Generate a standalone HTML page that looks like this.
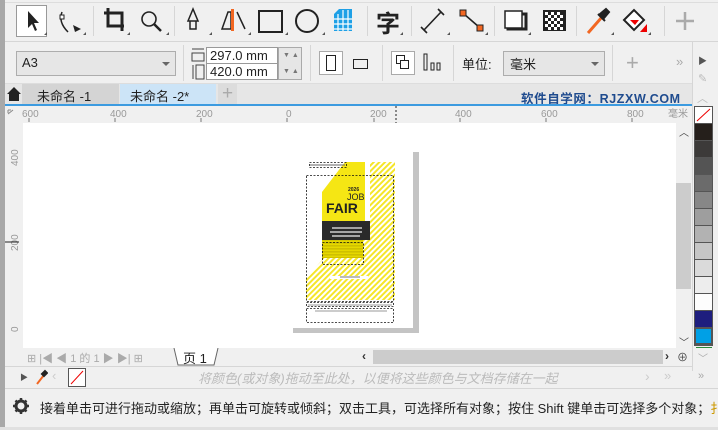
<!DOCTYPE html>
<html><head><meta charset="utf-8"><style>
*{margin:0;padding:0;box-sizing:border-box}
body{width:718px;height:430px;background:#f0f0f0;position:relative;overflow:hidden;font-family:"Liberation Sans","Noto Sans CJK SC",sans-serif;font-size:13px;color:#222}
.a{position:absolute}
.sep{position:absolute;width:1px;background:#d6d6d6}
.hl{position:absolute;height:1px;background:#d6d6d6}
</style></head><body>
<div class="a" style="left:0;top:0;width:5px;height:430px;background:#a8a8a8"></div>
<div class="hl" style="left:5px;top:2px;width:713px;background:#ddd"></div>
<svg class="a" style="left:5px;top:3px" width="713" height="38" viewBox="5 3 713 38">
<rect x="16.5" y="5.5" width="30" height="31" fill="#fff" stroke="#999"/>
<path d="M28 11 L28 28 L32 24 L35 31 L37 30 L34 23 L39 23 Z" fill="#222"/>
<path d="M44 35 l3 0 l0 -3z M83 35 l3 0 l0 -3z M127 35 l3 0 l0 -3z M166 35 l3 0 l0 -3z M209 35 l3 0 l0 -3z M248 35 l3 0 l0 -3z M285 35 l3 0 l0 -3z M322 35 l3 0 l0 -3z M400 35 l3 0 l0 -3z M447 35 l3 0 l0 -3z M485 35 l3 0 l0 -3z M528 35 l3 0 l0 -3z M611 35 l3 0 l0 -3z M648 35 l3 0 l0 -3z" fill="#555"/>
<path d="M62 12 q-4 10 6 20" fill="none" stroke="#222" stroke-width="1.5"/><rect x="60" y="15" width="4" height="4" fill="#fff" stroke="#222"/><path d="M73 25 l8 4 l-6 3z" fill="#222"/>
<path d="M108 8 v18 h16 M104 13 h18 v18" fill="none" stroke="#222" stroke-width="3"/>
<circle cx="149" cy="19" r="7" fill="none" stroke="#222" stroke-width="1.6"/><path d="M154 24 l7 7" stroke="#222" stroke-width="2.5"/>
<path d="M193 9 l-5 12 h10z M190 21 v8 h6 v-8" fill="none" stroke="#222" stroke-width="1.5"/>
<path d="M222 29 l6 -17 h3 v17 z M237 12 l8 17" fill="none" stroke="#222" stroke-width="1.5"/><rect x="231" y="9" width="3" height="22" fill="#f26722"/>
<rect x="259" y="11" width="23" height="21" fill="none" stroke="#222" stroke-width="2"/>
<circle cx="307" cy="21" r="11" fill="none" stroke="#222" stroke-width="2"/>
<path d="M334 14 l5 -5 h13 v22 h-18z" fill="#1ea0e6"/><path d="M338 14v17M343 10v21M348 10v21M334 19h18M334 24h18M334 29h18" stroke="#fff" stroke-width="1.2"/>
<text x="376" y="32" font-size="24" font-weight="bold" fill="#222" font-family="Noto Sans CJK SC">字</text>
<path d="M424 30 l17 -18 M421 27 l6 6 M438 9 l6 6" stroke="#222" stroke-width="1.6"/>
<path d="M464 14 l15 13" stroke="#222" stroke-width="1.6"/><rect x="460" y="10" width="6" height="6" fill="#f26722" stroke="#222"/><rect x="477" y="25" width="6" height="6" fill="#f26722" stroke="#222"/>
<rect x="505" y="11" width="17" height="17" fill="#fff" stroke="#222" stroke-width="1.5"/><path d="M522 14 h4 v15 h-18 v-1" fill="none" stroke="#222" stroke-width="3"/>
<rect x="543" y="10" width="23" height="21" fill="#222"/>
<g fill="#fff"><rect x="545" y="12" width="3" height="3"/><rect x="551" y="12" width="3" height="3"/><rect x="557" y="12" width="3" height="3"/><rect x="548" y="15" width="3" height="3"/><rect x="554" y="15" width="3" height="3"/><rect x="560" y="15" width="3" height="3"/><rect x="545" y="18" width="3" height="3"/><rect x="551" y="18" width="3" height="3"/><rect x="557" y="18" width="3" height="3"/><rect x="548" y="21" width="3" height="3"/><rect x="554" y="21" width="3" height="3"/><rect x="560" y="21" width="3" height="3"/><rect x="545" y="24" width="3" height="3"/><rect x="551" y="24" width="3" height="3"/><rect x="557" y="24" width="3" height="3"/><rect x="548" y="27" width="3" height="3"/><rect x="554" y="27" width="3" height="3"/><rect x="560" y="27" width="3" height="3"/></g>
<path d="M588 33 l14 -16" stroke="#f26722" stroke-width="3"/><path d="M600 14 l6 -5 l3 3 l-5 6z M598 14 l7 7" stroke="#222" stroke-width="2" fill="#222"/>
<path d="M624 20 l10 -10 l10 10 l-10 10z" fill="#fff" stroke="#222" stroke-width="2"/><path d="M630 20 h9 l-4 5z" fill="#e00"/><path d="M647 24 v8 h-7z" fill="#e00"/>
<path d="M685 12 v18 M676 21 h18" stroke="#aaa" stroke-width="2.5"/>
</svg>
<div class="sep" style="left:93px;top:6px;height:30px"></div>
<div class="sep" style="left:174px;top:6px;height:30px"></div>
<div class="sep" style="left:367px;top:6px;height:30px"></div>
<div class="sep" style="left:411px;top:6px;height:30px"></div>
<div class="sep" style="left:494px;top:6px;height:30px"></div>
<div class="sep" style="left:576px;top:6px;height:30px"></div>
<div class="sep" style="left:664px;top:6px;height:30px"></div>
<div class="hl" style="left:5px;top:41px;width:713px"></div>
<div class="a" style="left:16px;top:51px;width:160px;height:25px;background:#e6e6e6;border:1px solid #adadad;padding:3px 5px;font-size:13px">A3</div>
<div class="a" style="left:162px;top:62px;border:4px solid transparent;border-top:4px solid #666"></div>
<div class="sep" style="left:183px;top:45px;height:36px"></div>
<svg class="a" style="left:190px;top:46px" width="16" height="34"><path d="M2 3h12M2 7h12v8h-12z" fill="none" stroke="#444"/><path d="M3 19v14M6 19h8v14h-8z" fill="none" stroke="#444"/></svg>
<div class="a" style="left:206px;top:47px;width:72px;height:33px;background:#fff;border:1px solid #999"></div>
<div class="a" style="left:206px;top:63px;width:72px;height:1px;background:#999"></div>
<div class="a" style="left:210px;top:48px;font-size:13px">297.0 mm</div>
<div class="a" style="left:210px;top:64px;font-size:13px">420.0 mm</div>
<div class="a" style="left:278px;top:47px;width:24px;height:33px;background:#e6e6e6;border:1px solid #aaa;color:#777;font-size:7px;line-height:16px;padding-left:4px">▼ ▲<br>▼ ▲</div>
<div class="sep" style="left:310px;top:45px;height:36px"></div>
<div class="a" style="left:319px;top:51px;width:24px;height:24px;background:#fff;border:1px solid #aaa"></div>
<div class="a" style="left:326px;top:55px;width:10px;height:16px;border:1px solid #222"></div>
<div class="a" style="left:353px;top:59px;width:15px;height:10px;border:1px solid #222"></div>
<div class="sep" style="left:382px;top:45px;height:36px"></div>
<div class="a" style="left:391px;top:51px;width:24px;height:24px;background:#fff;border:1px solid #aaa"></div>
<div class="a" style="left:396px;top:55px;width:9px;height:9px;border:1px solid #222"></div>
<div class="a" style="left:400px;top:60px;width:9px;height:9px;border:1px solid #222;background:#fff"></div>
<svg class="a" style="left:422px;top:53px" width="20" height="20"><rect x="2" y="1" width="3" height="16" fill="none" stroke="#222"/><rect x="9" y="10" width="3" height="7" fill="none" stroke="#222"/><rect x="15" y="10" width="3" height="7" fill="none" stroke="#222"/></svg>
<div class="sep" style="left:453px;top:45px;height:36px"></div>
<div class="a" style="left:462px;top:54px;font-size:13px">单位:</div>
<div class="a" style="left:503px;top:51px;width:102px;height:25px;background:#e6e6e6;border:1px solid #adadad;padding:2px 6px;font-size:13px">毫米</div>
<div class="a" style="left:591px;top:62px;border:4px solid transparent;border-top:4px solid #666"></div>
<div class="sep" style="left:612px;top:45px;height:36px"></div>
<div class="a" style="left:626px;top:50px;font-size:22px;color:#aaa">+</div>
<div class="a" style="left:676px;top:54px;font-size:13px;color:#aaa">»</div>
<div class="sep" style="left:692px;top:41px;height:330px"></div>
<div class="a" style="left:698px;top:54px;font-size:9px;color:#555">▶</div>
<div class="a" style="left:698px;top:72px;font-size:11px;color:#bbb">✎</div>
<div class="a" style="left:697px;top:90px;font-size:11px;color:#bbb">︿</div>
<div class="hl" style="left:5px;top:83px;width:687px;background:#ddd"></div>
<div class="a" style="left:5px;top:84px;width:687px;height:21px;background:#e6e6e6"></div>
<svg class="a" style="left:6px;top:86px" width="16" height="16"><path d="M1 8 L8 1 L15 8 H13 V15 H3 V8Z" fill="#222"/></svg>
<div class="a" style="left:22px;top:84px;width:97px;height:21px;background:#d4d4d4"></div>
<div class="a" style="left:37px;top:86px;font-size:13px">未命名 -1</div>
<div class="a" style="left:120px;top:84px;width:96px;height:21px;background:#cce4f7"></div>
<div class="a" style="left:130px;top:86px;font-size:13px">未命名 -2*</div>
<div class="a" style="left:218px;top:84px;width:19px;height:21px;background:#dcdcdc;color:#aaa;font-size:19px;text-align:center;line-height:20px">+</div>
<div class="a" style="left:521px;top:88px;font-size:12.5px;font-weight:bold;color:#1f4b8e;letter-spacing:0.6px">软件自学网：RJZXW.COM</div>
<div class="a" style="left:5px;top:104px;width:687px;height:2px;background:#3c9be0"></div>
<div class="a" style="left:5px;top:106px;width:687px;height:17px;background:#f0f0f0"></div>
<div class="a" style="left:5px;top:106px;width:18px;height:242px;background:#f0f0f0"></div>
<svg class="a" style="left:5px;top:106px" width="687" height="242" font-family="Liberation Sans" font-size="10" fill="#999">
<text x="17" y="11">600</text><text x="105" y="11">400</text><text x="191" y="11">200</text><text x="281" y="11">0</text><text x="365" y="11">200</text><text x="450" y="11">400</text><text x="536" y="11">600</text><text x="622" y="11">800</text><text x="663" y="11" font-family="Noto Sans CJK SC">毫米</text>
<path d="M24 16v-4M110 16v-4M196 16v-4M282 16v-4M369 16v-4M455 16v-4M541 16v-4M627 16v-4" stroke="#777"/>
<path d="M391 0v17" stroke="#222" stroke-dasharray="2,2"/>
<g transform="translate(13,60) rotate(-90)"><text x="0" y="0">400</text></g>
<g transform="translate(13,145) rotate(-90)"><text x="0" y="0">200</text></g>
<g transform="translate(13,226) rotate(-90)"><text x="0" y="0">0</text></g>
<path d="M0 136h14" stroke="#222"/>
<path d="M3 8l5 -4M3 4h3M3 4v3" stroke="#888"/>
</svg>
<div class="a" style="left:23px;top:123px;width:653px;height:225px;background:#fff"></div>
<div class="a" style="left:676px;top:123px;width:16px;height:225px;background:#f0f0f0"></div>
<div class="a" style="left:676px;top:183px;width:15px;height:106px;background:#ccc"></div>
<div class="a" style="left:679px;top:124px;font-size:10px;color:#444">︿</div>
<div class="a" style="left:679px;top:334px;font-size:10px;color:#444">﹀</div>
<div class="a" style="left:293px;top:152px;width:126px;height:181px;background:#c4c4c4"></div>
<svg class="a" style="left:270px;top:140px" width="160" height="200" viewBox="0 0 160 200">
<defs><pattern id="h" width="4" height="4" patternUnits="userSpaceOnUse" patternTransform="rotate(45)"><rect width="2" height="4" fill="#f5e629"/></pattern>
<pattern id="hs" width="4" height="3" patternUnits="userSpaceOnUse"><rect width="4" height="1.6" fill="#cfc000"/></pattern></defs>
<rect x="17" y="7" width="126" height="181" fill="#fff"/>
<polygon points="100,22 125,22 125,160 36,160 36,138 52,120 52,100 100,100" fill="url(#h)"/>
<polygon points="75,22 95,22 95,81 52,81 52,52" fill="#f5e614"/>
<rect x="52" y="81" width="48" height="19" fill="#2a2a2a"/>
<rect x="52" y="100" width="41" height="18" fill="#e6d800"/>
<rect x="52" y="100" width="41" height="18" fill="url(#hs)"/>
<path d="M62 88h30M60 92h32M62 96h28" stroke="#eee" stroke-width="1.2"/>
<text x="78" y="51" font-size="5" font-weight="bold" fill="#222">2026</text>
<text x="77" y="60" font-size="9" fill="#222">JOB</text>
<text x="56" y="73" font-size="14" font-weight="bold" fill="#222">FAIR</text>
<rect x="60" y="136" width="38" height="3" fill="#fff"/><rect x="70" y="136" width="20" height="2" fill="#bbb"/>
<g fill="none" stroke="#111" stroke-dasharray="2,1.5" stroke-width="0.8">
<rect x="39.5" y="22.5" width="37" height="5"/>
<rect x="36.5" y="35.5" width="87" height="126"/>
<rect x="52.5" y="102.5" width="41" height="22"/>
<rect x="36.5" y="162.5" width="87" height="4"/>
<rect x="36.5" y="168.5" width="87" height="14"/>
</g>
<path d="M40 25h35" stroke="#666"/>
<path d="M38 165h84M45 171h72" stroke="#999" stroke-width="1"/>
</svg>
<div class="a" style="left:694px;top:106px;width:19px;height:240px;background:#555"></div>
<svg class="a" style="left:695px;top:107px" width="17" height="238">
<rect width="17" height="16" fill="#fff"/><path d="M2 14L15 2" stroke="#e00"/>
<rect y="17" width="17" height="16" fill="#251f1b"/>
<rect y="34" width="17" height="16" fill="#3c3a39"/>
<rect y="51" width="17" height="16" fill="#545454"/>
<rect y="68" width="17" height="16" fill="#6b6b6b"/>
<rect y="85" width="17" height="16" fill="#878787"/>
<rect y="102" width="17" height="16" fill="#9e9e9e"/>
<rect y="119" width="17" height="16" fill="#b2b2b2"/>
<rect y="136" width="17" height="16" fill="#c6c6c6"/>
<rect y="153" width="17" height="16" fill="#dadada"/>
<rect y="170" width="17" height="16" fill="#ededed"/>
<rect y="187" width="17" height="16" fill="#fdfdfd"/>
<rect y="204" width="17" height="16" fill="#1e1e7e"/>
<rect x="1" y="222" width="15" height="14" fill="#00a0e6"/>
</svg>
<div class="a" style="left:696px;top:347px;width:16px;height:1px;background:#2a8a3a"></div>
<div class="a" style="left:698px;top:350px;font-size:10px;color:#aaa">﹀</div>
<div class="a" style="left:698px;top:370px;font-size:11px;color:#aaa">»</div>
<div class="a" style="left:23px;top:348px;width:669px;height:18px;background:#f0f0f0"></div>
<div class="a" style="left:27px;top:350px;font-size:11px;color:#aaa;white-space:nowrap">⊞ |◀ ◀ 1 的 1 ▶ ▶| ⊞</div>
<svg class="a" style="left:170px;top:348px" width="52" height="18"><path d="M4 0 L8 17 H44 L48 0" fill="#fff" stroke="#666"/></svg>
<div class="a" style="left:183px;top:348px;font-size:13px">页 1</div>
<div class="a" style="left:362px;top:349px;font-size:12px;font-weight:bold;color:#333">‹</div>
<div class="a" style="left:373px;top:350px;width:290px;height:14px;background:#ccc"></div>
<div class="a" style="left:665px;top:349px;font-size:12px;font-weight:bold;color:#333">›</div>
<div class="a" style="left:677px;top:349px;font-size:11px;color:#444">⊕</div>
<div class="hl" style="left:5px;top:366px;width:687px"></div>
<div class="a" style="left:20px;top:372px;font-size:8px;color:#555">▶</div>
<svg class="a" style="left:34px;top:368px" width="14" height="18"><path d="M3 16 l7 -9" stroke="#f26722" stroke-width="2"/><path d="M8 6 l3 -3 l2 2 l-3 3z" fill="#222" stroke="#222" stroke-width="2"/></svg>
<div class="a" style="left:52px;top:368px;font-size:13px;color:#ccc">‹</div>
<div class="a" style="left:68px;top:368px;width:18px;height:19px;background:#fff;border:1px solid #555"></div>
<svg class="a" style="left:69px;top:369px" width="16" height="17"><path d="M2 15L14 2" stroke="#e00"/></svg>
<div class="a" style="left:198px;top:368px;font-size:13px;color:#bbb;font-style:italic">将颜色(或对象)拖动至此处，以便将这些颜色与文档存储在一起</div>
<div class="a" style="left:645px;top:368px;font-size:14px;color:#ccc">›</div>
<div class="a" style="left:664px;top:368px;font-size:13px;color:#ccc">»</div>
<div class="hl" style="left:5px;top:388px;width:713px"></div>
<svg class="a" style="left:12px;top:397px" width="20" height="20"><circle cx="9" cy="9" r="5" fill="none" stroke="#333" stroke-width="3"/><path d="M9 1v4M9 13v4M1 9h4M13 9h4M3.5 3.5l2.5 2.5M12 12l2.5 2.5M3.5 14.5l2.5-2.5M12 6l2.5-2.5" stroke="#333" stroke-width="2.5"/></svg>
<div class="a" style="left:40px;top:398px;font-size:13px;white-space:nowrap">接着单击可进行拖动或缩放；再单击可旋转或倾斜；双击工具，可选择所有对象；按住 Shift 键单击可选择多个对象；<span style="color:#c90">扌</span></div>
<div class="a" style="left:0;top:427px;width:718px;height:3px;background:#e0e0e0"></div>
</body></html>
